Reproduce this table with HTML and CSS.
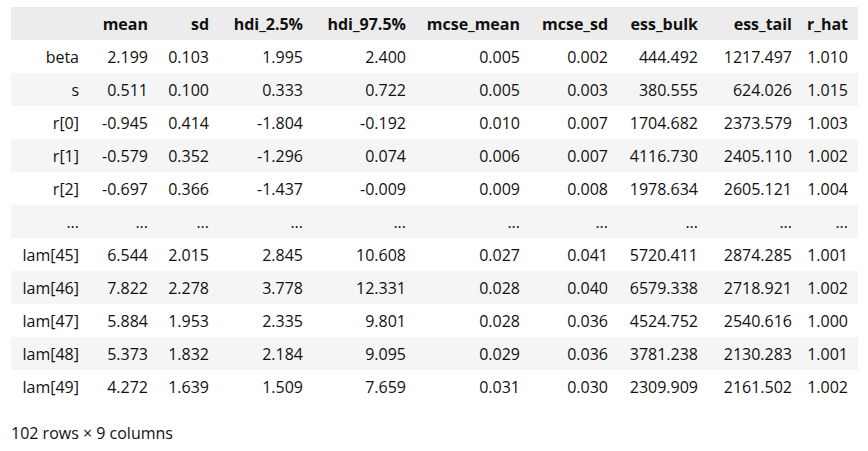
FILE: index.html
```html
<!DOCTYPE html>
<html>
<head>
<meta charset="utf-8">
<link rel="stylesheet" href="styles.css">
</head>
<body>
<div class="output">
<table class="dataframe">
<colgroup>
<col class="c-idx"><col class="c-mean"><col class="c-sd"><col class="c-h25"><col class="c-h975"><col class="c-mm"><col class="c-ms"><col class="c-eb"><col class="c-et"><col class="c-rh">
</colgroup>
<thead>
<tr><th></th><th>mean</th><th>sd</th><th>hdi_2.5%</th><th>hdi_97.5%</th><th>mcse_mean</th><th>mcse_sd</th><th>ess_bulk</th><th>ess_tail</th><th>r_hat</th></tr>
</thead>
<tbody>
<tr><th>beta</th><td>2.199</td><td>0.103</td><td>1.995</td><td>2.400</td><td>0.005</td><td>0.002</td><td>444.492</td><td>1217.497</td><td>1.010</td></tr>
<tr><th>s</th><td>0.511</td><td>0.100</td><td>0.333</td><td>0.722</td><td>0.005</td><td>0.003</td><td>380.555</td><td>624.026</td><td>1.015</td></tr>
<tr><th>r[0]</th><td>-0.945</td><td>0.414</td><td>-1.804</td><td>-0.192</td><td>0.010</td><td>0.007</td><td>1704.682</td><td>2373.579</td><td>1.003</td></tr>
<tr><th>r[1]</th><td>-0.579</td><td>0.352</td><td>-1.296</td><td>0.074</td><td>0.006</td><td>0.007</td><td>4116.730</td><td>2405.110</td><td>1.002</td></tr>
<tr><th>r[2]</th><td>-0.697</td><td>0.366</td><td>-1.437</td><td>-0.009</td><td>0.009</td><td>0.008</td><td>1978.634</td><td>2605.121</td><td>1.004</td></tr>
<tr><th>...</th><td>...</td><td>...</td><td>...</td><td>...</td><td>...</td><td>...</td><td>...</td><td>...</td><td>...</td></tr>
<tr><th>lam[45]</th><td>6.544</td><td>2.015</td><td>2.845</td><td>10.608</td><td>0.027</td><td>0.041</td><td>5720.411</td><td>2874.285</td><td>1.001</td></tr>
<tr><th>lam[46]</th><td>7.822</td><td>2.278</td><td>3.778</td><td>12.331</td><td>0.028</td><td>0.040</td><td>6579.338</td><td>2718.921</td><td>1.002</td></tr>
<tr><th>lam[47]</th><td>5.884</td><td>1.953</td><td>2.335</td><td>9.801</td><td>0.028</td><td>0.036</td><td>4524.752</td><td>2540.616</td><td>1.000</td></tr>
<tr><th>lam[48]</th><td>5.373</td><td>1.832</td><td>2.184</td><td>9.095</td><td>0.029</td><td>0.036</td><td>3781.238</td><td>2130.283</td><td>1.001</td></tr>
<tr><th>lam[49]</th><td>4.272</td><td>1.639</td><td>1.509</td><td>7.659</td><td>0.031</td><td>0.030</td><td>2309.909</td><td>2161.502</td><td>1.002</td></tr>
</tbody>
</table>
<p class="shape">102 rows × 9 columns</p>
</div>
</body>
</html>
```
FILE: styles.css
```css
html, body {
  margin: 0;
  padding: 0;
  background: #ffffff;
}

body {
  font-family: "Open Sans", "Noto Sans", sans-serif;
  font-size: 16px;
  color: #111111;
}

.output {
  padding: 7px 0 0 11px;
}

.dataframe {
  border-collapse: collapse;
  border-spacing: 0;
  table-layout: fixed;
  width: 847px;
}

.c-idx { width: 78px; }
.c-mean { width: 69px; }
.c-sd { width: 61px; }
.c-h25 { width: 94px; }
.c-h975 { width: 103px; }
.c-mm { width: 114px; }
.c-ms { width: 88px; }
.c-eb { width: 90px; }
.c-et { width: 94px; }
.c-rh { width: 56px; }

.dataframe th,
.dataframe td {
  height: 33px;
  padding: 0 10px 0 0;
  text-align: right;
  vertical-align: middle;
  line-height: 20px;
  white-space: nowrap;
  box-sizing: border-box;
}

.dataframe thead th {
  font-weight: 700;
  background: #ececec;
}

.dataframe tbody th {
  font-weight: 400;
}

.dataframe tbody tr:nth-child(even) {
  background: #f5f5f5;
}

.shape {
  margin: 19px 0 0 0;
  line-height: 22px;
}
```
